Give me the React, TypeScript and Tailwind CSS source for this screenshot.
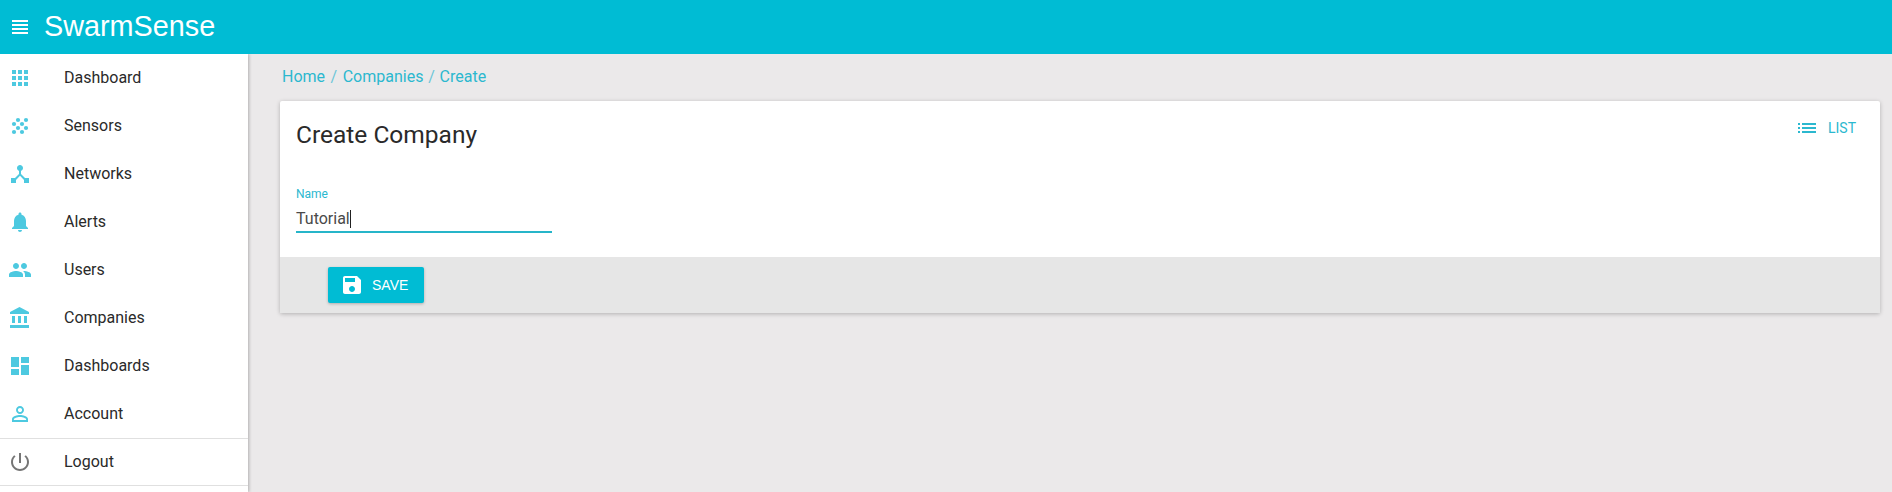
const teal = 'text-[#4dc9e0]';

const icons: Record<string, string> = {
  menu: 'M4 5h16v2H4V5zm0 4h16v2H4V9zm0 4h16v2H4v-2zm0 4h16v2H4v-2z',
  apps: 'M4 8h4V4H4v4zm6 12h4v-4h-4v4zm-6 0h4v-4H4v4zm0-6h4v-4H4v4zm6 0h4v-4h-4v4zm6-10v4h4V4h-4zm-6 4h4V4h-4v4zm6 6h4v-4h-4v4zm0 6h4v-4h-4v4z',
  hub: 'M17 16l-4-4V8.82C14.16 8.4 15 7.3 15 6c0-1.66-1.34-3-3-3S9 4.34 9 6c0 1.3.84 2.4 2 2.82V12l-4 4H3v5h5v-3.05l4-4.2 4 4.2V21h5v-5h-4z',
  bell: 'M12 22c1.1 0 2-.9 2-2h-4c0 1.1.89 2 2 2zm6-6v-5c0-3.07-1.64-5.64-4.5-6.32V4c0-.83-.67-1.5-1.5-1.5s-1.5.67-1.5 1.5v.68C7.63 5.36 6 7.92 6 11v5l-2 2v1h16v-1l-2-2z',
  people: 'M16 11c1.66 0 2.99-1.34 2.99-3S17.66 5 16 5c-1.66 0-3 1.34-3 3s1.34 3 3 3zm-8 0c1.66 0 2.99-1.34 2.99-3S9.66 5 8 5C6.34 5 5 6.34 5 8s1.34 3 3 3zm0 2c-2.33 0-7 1.17-7 3.5V19h14v-2.5c0-2.33-4.67-3.5-7-3.5zm8 0c-.29 0-.62.02-.97.05 1.16.84 1.97 1.97 1.97 3.45V19h6v-2.5c0-2.33-4.67-3.5-7-3.5z',
  bank: 'M4 10v7h3v-7H4zm6 0v7h3v-7h-3zM2 22h19v-3H2v3zm14-12v7h3v-7h-3zm-4.5-9L2 6v2h19V6l-9.5-5z',
  dashboard: 'M3 13h8V3H3v10zm0 8h8v-6H3v6zm10 0h8V11h-8v10zm0-18v6h8V3h-8z',
  person: 'M12 5.9c1.16 0 2.1.94 2.1 2.1s-.94 2.1-2.1 2.1S9.9 9.16 9.9 8s.94-2.1 2.1-2.1m0 9c2.97 0 6.1 1.46 6.1 2.1v1.1H5.9V17c0-.64 3.13-2.1 6.1-2.1M12 4C9.79 4 8 5.79 8 8s1.79 4 4 4 4-1.79 4-4-1.79-4-4-4zm0 9c-2.67 0-8 1.34-8 4v3h16v-3c0-2.66-5.33-4-8-4z',
  power: 'M13 3h-2v10h2V3zm4.83 2.17l-1.42 1.42C17.99 7.86 19 9.81 19 12c0 3.87-3.13 7-7 7s-7-3.13-7-7c0-2.19 1.01-4.14 2.58-5.42L6.17 5.17C4.23 6.82 3 9.26 3 12c0 4.97 4.03 9 9 9s9-4.03 9-9c0-2.74-1.23-5.18-3.17-6.83z',
  save: 'M17 3H5c-1.11 0-2 .9-2 2v14c0 1.1.89 2 2 2h14c1.1 0 2-.9 2-2V7l-4-4zm-5 16c-1.66 0-3-1.34-3-3s1.34-3 3-3 3 1.34 3 3-1.34 3-3 3zm3-10H5V5h10v4z',
  list: 'M3 13h2v-2H3v2zm0 4h2v-2H3v2zm0-8h2V7H3v2zm4 4h14v-2H7v2zm0 4h14v-2H7v2zM7 7v2h14V7H7z',
};

function Icon({ name, className }: { name: string; className?: string }) {
  return (
    <svg viewBox="0 0 24 24" fill="currentColor" className={className}>
      <path d={icons[name]} />
    </svg>
  );
}

// sensor grid is a scatter of dots, no stock icon has it
function SensorsIcon({ className }: { className?: string }) {
  const dots = [
    [10, 6], [18, 6],
    [6, 10], [14, 10],
    [10, 14], [18, 14],
    [6, 18], [14, 18],
  ];
  return (
    <svg viewBox="0 0 24 24" fill="currentColor" className={className}>
      {dots.map(([x, y]) => (
        <circle key={`${x}-${y}`} cx={x} cy={y} r="2.1" />
      ))}
    </svg>
  );
}

const navItems = [
  { label: 'Dashboard', icon: 'apps' },
  { label: 'Sensors', icon: 'sensors' },
  { label: 'Networks', icon: 'hub' },
  { label: 'Alerts', icon: 'bell' },
  { label: 'Users', icon: 'people' },
  { label: 'Companies', icon: 'bank' },
  { label: 'Dashboards', icon: 'dashboard' },
  { label: 'Account', icon: 'person' },
];

function NavItem({ label, icon }: { label: string; icon: string }) {
  return (
    <div className="flex h-12 items-center pl-2">
      {icon === 'sensors' ? (
        <SensorsIcon className={`h-6 w-6 ${teal}`} />
      ) : (
        <Icon name={icon} className={`h-6 w-6 ${teal}`} />
      )}
      <span className="ml-[32px] text-base text-[#2a2a2a]">{label}</span>
    </div>
  );
}

export default function App() {
  return (
    <div className="flex h-[492px] w-[1892px] flex-col overflow-hidden bg-[#ebe9ea] font-['Roboto',sans-serif]">
      <header className="z-20 flex h-[54px] shrink-0 items-center bg-[#00bcd4] pl-2 text-white">
        <Icon name="menu" className="h-6 w-6" />
        <span className="ml-3 font-['Liberation_Sans',sans-serif] text-[28.8px] font-normal">SwarmSense</span>
      </header>
      <div className="flex min-h-0 flex-1">
        <aside className="z-10 w-[248px] shrink-0 bg-white shadow-[1px_0_3px_rgba(0,0,0,0.25)]">
          {navItems.map((item) => (
            <NavItem key={item.label} {...item} />
          ))}
          <div className="flex h-12 items-center border-y border-[#e0e0e0] pl-2">
            <Icon name="power" className="h-6 w-6 text-[#757575]" />
            <span className="ml-[32px] text-base text-[#2a2a2a]">Logout</span>
          </div>
        </aside>
        <main className="min-w-0 flex-1 pl-[32px] pr-[12px]">
          <nav className="mb-[2px] flex h-[45px] items-center pl-[2px] text-base text-[#2bb8cf]">
            <span>Home</span>
            <span className="mx-[5.5px] text-[#6cc6d8]">/</span>
            <span>Companies</span>
            <span className="mx-[4.8px] text-[#6cc6d8]">/</span>
            <span>Create</span>
          </nav>
          <section className="rounded-[2px] bg-white shadow-[0_1px_4px_rgba(0,0,0,0.25)]">
            <div className="flex items-start justify-between pl-4 pr-[24px] pt-[18px]">
              <h1 className="text-[24.5px] leading-[32px] text-[#2a2a2a]">Create Company</h1>
              <div className="-mt-[3px] flex items-center gap-[9px] text-sm text-[#2bb8cf]">
                <Icon name="list" className="h-6 w-6" />
                <span>LIST</span>
              </div>
            </div>
            <div className="ml-4 mt-[36px] w-[256px] pb-[24px]">
              <label className="block text-xs leading-[14px] text-[#2bb8cf]">Name</label>
              <div className="flex h-[32px] items-center border-b-2 border-[#26b5c9] pt-[6px] text-base text-[#4a4a4a]">
                Tutorial
                <span className="h-[18px] w-px bg-[#212121]" />
              </div>
            </div>
            <div className="flex h-[56px] items-center bg-[#e6e6e6] pl-[48px]">
              <button className="flex h-9 w-[96px] items-center gap-[8px] rounded-[2px] bg-[#00bcd4] pl-[12px] font-['Liberation_Sans',sans-serif] text-sm text-white shadow-[0_1px_3px_rgba(0,0,0,0.25)]">
                <Icon name="save" className="h-6 w-6" />
                SAVE
              </button>
            </div>
          </section>
        </main>
      </div>
    </div>
  );
}
